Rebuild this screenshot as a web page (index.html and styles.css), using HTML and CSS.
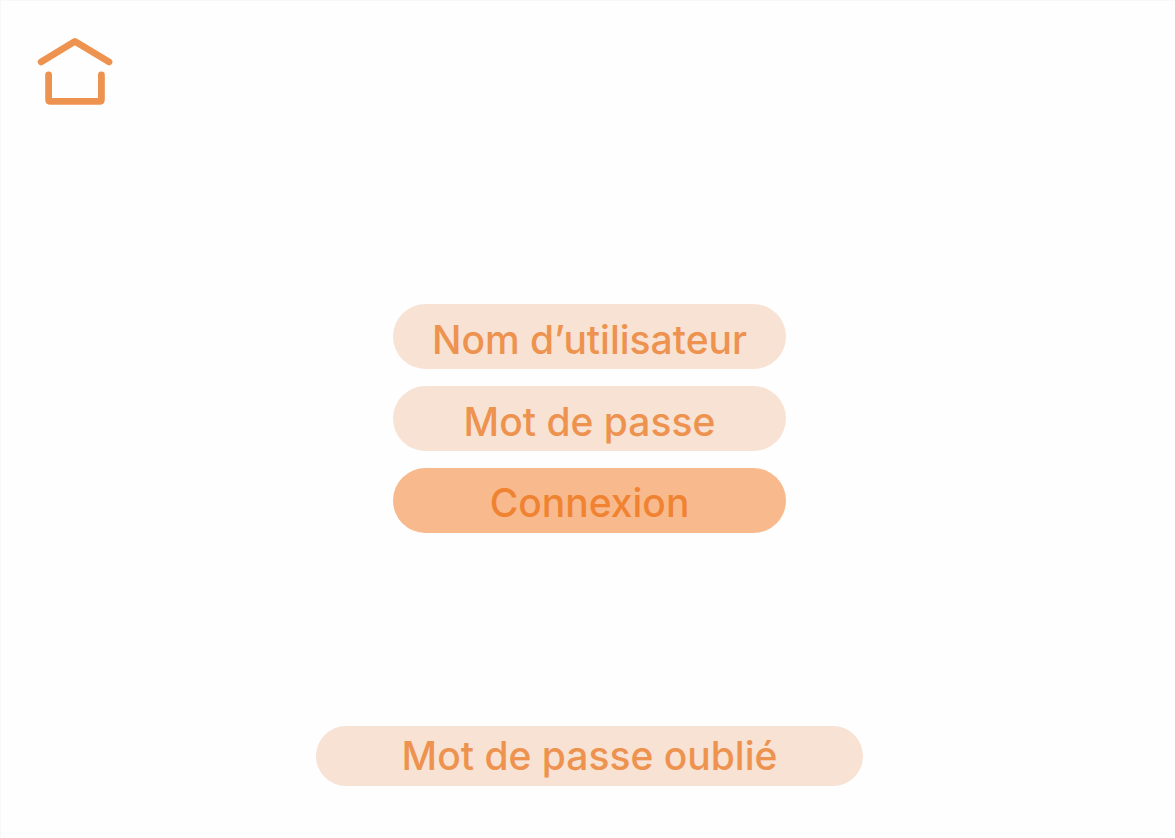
FILE: index.html
```html
<!DOCTYPE html>
<html lang="fr">
<head>
  <meta charset="utf-8">
  <meta name="viewport" content="width=device-width, initial-scale=1">
  <title>Connexion</title>
  <link rel="stylesheet" href="styles.css">
</head>
<body class="page">
  <header class="header">
    <a class="home" href="#" aria-label="Accueil">
      <svg class="home-icon" viewBox="0 0 76 74" fill="none" stroke="currentColor" stroke-linecap="round" stroke-linejoin="round" aria-hidden="true">
        <path stroke-width="6.8" d="M4.2 24.9 37.9 4.4 72 24.9"/>
        <path stroke-width="6.8" d="M11.6 38V62.5Q11.6 64.4 13.5 64.4H62.5Q64.4 64.4 64.4 62.5V38"/>
      </svg>
    </a>
  </header>
  <form class="login">
    <input class="pill" type="text" placeholder="Nom d’utilisateur" aria-label="Nom d’utilisateur">
    <input class="pill" type="password" placeholder="Mot de passe" aria-label="Mot de passe">
    <button class="pill pill-submit" type="submit">Connexion</button>
  </form>
  <footer class="footer">
    <a class="forgot" href="#">Mot de passe oublié</a>
  </footer>
</body>
</html>
```

FILE: styles.css
```css
* {
  box-sizing: border-box;
}

.page {
  display: flex;
  flex-direction: column;
  justify-content: space-between;
  min-height: 100vh;
  margin: 0;
  padding: 36px 33px 52px 36px;
  border-top: 1px solid #f8f8f8;
  border-left: 1px solid #f8f8f8;
  background: #fefefe;
  color: #ee924f;
  font-family: Inter, "Liberation Sans", sans-serif;
  font-size: 39px;
  font-weight: 500;
  line-height: 48px;
}

.header {
  display: flex;
}

.home {
  display: flex;
  color: inherit;
}

.home-icon {
  width: 76px;
  height: 74px;
}

.login {
  display: grid;
  gap: 17px;
  width: 100%;
  max-width: 393px;
  margin: 0 auto;
}

.pill {
  width: 100%;
  height: 65px;
  margin: 0;
  padding: 5px 24px 0;
  border: 0;
  border-radius: 33px;
  background: #f7e2d3;
  color: inherit;
  font: inherit;
  text-align: center;
}

.pill::placeholder {
  color: inherit;
  opacity: 1;
}

.pill-submit {
  background: #f8ba8c;
  color: #f08332;
  cursor: pointer;
}

.footer {
  display: flex;
  justify-content: center;
}

.forgot {
  width: 100%;
  max-width: 547px;
  padding: 6px 24px;
  border-radius: 30px;
  background: #f7e2d3;
  color: inherit;
  text-align: center;
  text-decoration: none;
}
```
